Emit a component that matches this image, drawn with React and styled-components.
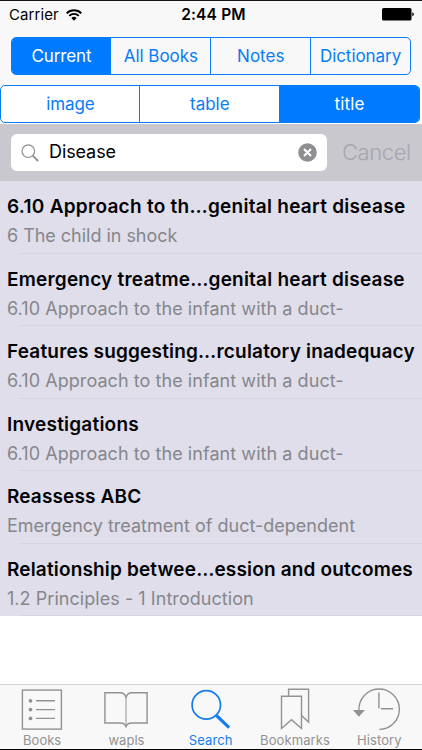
import React, { useState } from "react";
import styled, { createGlobalStyle } from "styled-components";

const GlobalStyle = createGlobalStyle`
	* {
		box-sizing: border-box;
	}
	body {
		margin: 0;
		background-color: #fff;
		font-family: Inter, "Liberation Sans", sans-serif;
	}
	button {
		font-family: inherit;
		padding: 0;
		margin: 0;
		border: 0;
		background: none;
		cursor: pointer;
	}
`;

const Screen = styled.div`
	display: flex;
	flex-direction: column;
	width: 422px;
	height: 750px;
	overflow: hidden;
	border-top: 1px solid #171417;
	border-bottom: 1px solid #000;
	background-color: #fff;
`;

const Header = styled.header`
	height: 84px;
	flex-shrink: 0;
	background-color: #f8f8f8;
`;

const StatusBar = styled.div`
	display: grid;
	grid-template-columns: 1fr auto 1fr;
	align-items: center;
	height: 27px;
	padding: 0 8px 0 9px;
	color: #000;
`;

const Carrier = styled.div`
	display: flex;
	align-items: center;
	gap: 7px;
	font-size: 15px;
	letter-spacing: 0.08px;
`;

const Time = styled.div`
	font-size: 15.5px;
	font-weight: 600;
	letter-spacing: 0.18px;
	padding-left: 4px;
`;

const Battery = styled.svg`
	justify-self: end;
`;

const Segments = styled.div`
	display: flex;
	width: ${(props) => props.$width}px;
	height: 38px;
	margin: ${(props) => props.$margin};
	flex-shrink: 0;
	border: 1px solid #087cf4;
	border-radius: 5px;
	overflow: hidden;
	background-color: ${(props) => props.$background};
`;

const Segment = styled.button`
	flex: 1 1 0;
	font-size: 17px;
	line-height: 37px;
	letter-spacing: ${(props) => props.$spacing}px;
	color: ${(props) => (props.$active ? "#fff" : "#087cf4")};
	background-color: ${(props) => (props.$active ? "#007aff" : "transparent")};
	&:first-child {
		margin-right: -0.4px;
	}
	& + & {
		border-left: 1px solid #087cf4;
	}
`;

const SearchBar = styled.div`
	display: flex;
	align-items: center;
	height: 57px;
	flex-shrink: 0;
	padding: 0 11px;
	background-color: #c9c8ce;
`;

const SearchField = styled.div`
	display: flex;
	align-items: center;
	width: 316px;
	height: 37px;
	padding: 0 10px;
	border-radius: 6px;
	background-color: #fff;
`;

const Query = styled.input`
	flex: 1;
	min-width: 0;
	margin-left: 10px;
	padding: 0 0 2px;
	border: 0;
	outline: 0;
	background: none;
	font-family: inherit;
	font-size: 18px;
	letter-spacing: -0.1px;
	color: #000;
`;

const ClearButton = styled.button`
	display: flex;
`;

const Cancel = styled.button`
	margin-left: 15px;
	padding-bottom: 2px;
	font-size: 22px;
	font-weight: 300;
	letter-spacing: -0.4px;
	color: #a6a6ac;
`;

const List = styled.ul`
	margin: 0;
	padding: 0;
	height: 435px;
	flex-shrink: 0;
	display: grid;
	grid-template-rows: repeat(6, 1fr);
	list-style: none;
	background-color: #dfdeea;
`;

const Item = styled.li`
	padding: 14px 0 0 7px;
	white-space: nowrap;
	background: linear-gradient(#d5d4df, #d5d4df) 19px 100% / 100% 1px no-repeat;
`;

const Title = styled.h3`
	margin: 0;
	font-size: 19px;
	line-height: 24px;
	font-weight: 600;
	letter-spacing: ${(props) => props.$spacing}px;
	color: #030306;
`;

const Subtitle = styled.p`
	margin: 5px 0 0;
	font-size: 18px;
	line-height: 24px;
	letter-spacing: ${(props) => props.$spacing}px;
	color: #86868b;
`;

const TabBar = styled.nav`
	display: grid;
	grid-template-columns: repeat(5, 84.3px);
	height: 65px;
	margin-top: auto;
	border-top: 1px solid #d2d2d2;
	background-color: #f8f8f8;
`;

const Tab = styled.button`
	display: flex;
	flex-direction: column;
	align-items: center;
	color: ${(props) => (props.$active ? "#147cf0" : "#929292")};
	svg {
		display: block;
		flex-shrink: 0;
		overflow: visible;
	}
`;

const TabLabel = styled.span`
	font-size: 13px;
	line-height: 16px;
	letter-spacing: ${(props) => props.$spacing}px;
`;

const WifiIcon = () => (
	<svg width="16" height="12" viewBox="0 0 16 12" fill="none" stroke="#000" strokeWidth="1.9">
		<path d="M0.7 4.3a10.3 10.3 0 0 1 14.6 0M3.2 6.9a6.8 6.8 0 0 1 9.6 0" />
		<path d="M8 11.8 5.3 9.1a3.8 3.8 0 0 1 5.4 0Z" fill="#000" stroke="none" />
	</svg>
);

const BatteryIcon = () => (
	<Battery width="32" height="13" viewBox="0 0 32 13">
		<rect x="0" y="0" width="29.5" height="12.5" rx="1.6" />
		<path d="M30.3 4.3q1.5.5 1.5 2t-1.5 2Z" />
	</Battery>
);

const FieldSearchIcon = () => (
	<svg width="18" height="18" viewBox="0 0 18 18" fill="none" stroke="#8e8e93">
		<circle cx="7.3" cy="7.2" r="6.3" strokeWidth="1.2" />
		<path d="m11.9 11.8 5.2 5.2" strokeWidth="1.8" />
	</svg>
);

const ClearIcon = () => (
	<svg width="19" height="19" viewBox="0 0 19 19">
		<circle cx="9.5" cy="9.5" r="9.3" fill="#8e8e93" />
		<path d="m6 6 7 7m0-7-7 7" stroke="#fff" strokeWidth="2" />
	</svg>
);

const tabIconProps = {
	width: 50,
	height: 47,
	viewBox: "0 0 50 47",
	fill: "none",
	stroke: "currentColor",
	strokeWidth: 1.4
};

const BooksIcon = () => (
	<svg {...tabIconProps}>
		<rect x="5.4" y="5.1" width="39" height="39" />
		<path d="M19 15.8h19M19 24.6h19M19 33.4h19" />
		<g fill="currentColor" stroke="none">
			<circle cx="13.5" cy="15.8" r="1.9" />
			<circle cx="13.5" cy="24.6" r="1.9" />
			<circle cx="13.5" cy="33.4" r="1.9" />
		</g>
	</svg>
);

const OpenBookIcon = () => (
	<svg {...tabIconProps}>
		<path d="M25 12.3Q23.3 7.7 19.5 7.7H3.9V38h15.6q4 0 5.5 3.6 1.5-3.6 5.5-3.6h15.6V7.7H30.5q-3.8 0-5.5 4.6Z" />
		<path d="M25 12.3v29.3" strokeWidth="1" />
	</svg>
);

const SearchIcon = () => (
	<svg {...tabIconProps}>
		<circle cx="20.3" cy="19.9" r="14.2" strokeWidth="1.7" />
		<path d="m30.3 30.3 12.8 12.4" strokeWidth="3.2" />
	</svg>
);

const BookmarksIcon = () => (
	<svg {...tabIconProps}>
		<path d="M11.5 11.3h20v32.2L21.5 34.7l-10 8.8Z" />
		<path d="M18.6 11.3V4.2h20v32.9l-7.1-6.7" />
	</svg>
);

const HistoryIcon = () => (
	<svg {...tabIconProps}>
		<path d="M5 25.5A20.2 20.2 0 1 1 25.3 44.4" />
		<path d="M24.9 7.5v16M26.9 23.7h12.2" />
		<path d="M-1.1 25h12l-6 6.8Z" fill="currentColor" stroke="none" />
	</svg>
);

const scopes = [
	{ label: "Current", spacing: -0.1 },
	{ label: "All Books", spacing: -0.05 },
	{ label: "Notes", spacing: 0 },
	{ label: "Dictionary", spacing: -0.05 }
];

const filters = [
	{ label: "image", spacing: -0.1 },
	{ label: "table", spacing: 0 },
	{ label: "title", spacing: 0.15 }
];

const results = [
	{
		title: "6.10 Approach to th…genital heart disease",
		subtitle: "6 The child in shock",
		titleSpacing: 0.27,
		subtitleSpacing: -0.03
	},
	{
		title: "Emergency treatme…genital heart disease",
		subtitle: "6.10 Approach to the infant with a duct-",
		titleSpacing: 0.21,
		subtitleSpacing: 0.06
	},
	{
		title: "Features suggesting…rculatory inadequacy",
		subtitle: "6.10 Approach to the infant with a duct-",
		titleSpacing: 0.19,
		subtitleSpacing: 0.06
	},
	{
		title: "Investigations",
		subtitle: "6.10 Approach to the infant with a duct-",
		titleSpacing: 0.22,
		subtitleSpacing: 0.06
	},
	{
		title: "Reassess ABC",
		subtitle: "Emergency treatment of duct-dependent",
		titleSpacing: 0.14,
		subtitleSpacing: 0.01
	},
	{
		title: "Relationship betwee…ession and outcomes",
		subtitle: "1.2 Principles - 1 Introduction",
		titleSpacing: 0.16,
		subtitleSpacing: 0.05
	}
];

const tabs = [
	{ label: "Books", Icon: BooksIcon, spacing: 0 },
	{ label: "wapls", Icon: OpenBookIcon, spacing: 0 },
	{ label: "Search", Icon: SearchIcon, spacing: 0.1 },
	{ label: "Bookmarks", Icon: BookmarksIcon, spacing: 0.1 },
	{ label: "History", Icon: HistoryIcon, spacing: 0.1 }
];

const SegmentedControl = ({ items, value, onChange, width, margin, background }) => (
	<Segments $width={width} $margin={margin} $background={background}>
		{items.map(({ label, spacing }) => (
			<Segment
				key={label}
				$active={label === value}
				$spacing={spacing}
				onClick={() => onChange(label)}
			>
				{label}
			</Segment>
		))}
	</Segments>
);

const App = () => {
	const [ scope, setScope ] = useState("Current");
	const [ filter, setFilter ] = useState("title");
	const [ query, setQuery ] = useState("Disease");
	const [ tab, setTab ] = useState("Search");

	return (
		<>
			<GlobalStyle />
			<Screen>
				<Header>
					<StatusBar>
						<Carrier>
							Carrier
							<WifiIcon />
						</Carrier>
						<Time>2:44 PM</Time>
						<BatteryIcon />
					</StatusBar>
					<SegmentedControl
						items={scopes}
						value={scope}
						onChange={setScope}
						width={400}
						margin="9px 0 0 11px"
						background="#f8f8f8"
					/>
				</Header>
				<SegmentedControl
					items={filters}
					value={filter}
					onChange={setFilter}
					width={420}
					margin="0 0 1px"
					background="#fff"
				/>
				<SearchBar>
					<SearchField>
						<FieldSearchIcon />
						<Query value={query} onChange={(e) => setQuery(e.target.value)} />
						<ClearButton aria-label="Clear" onClick={() => setQuery("")}>
							<ClearIcon />
						</ClearButton>
					</SearchField>
					<Cancel>Cancel</Cancel>
				</SearchBar>
				<List>
					{results.map((result) => (
						<Item key={result.title}>
							<Title $spacing={result.titleSpacing}>{result.title}</Title>
							<Subtitle $spacing={result.subtitleSpacing}>{result.subtitle}</Subtitle>
						</Item>
					))}
				</List>
				<TabBar>
					{tabs.map(({ label, Icon, spacing }) => (
						<Tab key={label} $active={label === tab} onClick={() => setTab(label)}>
							<Icon />
							<TabLabel $spacing={spacing}>{label}</TabLabel>
						</Tab>
					))}
				</TabBar>
			</Screen>
		</>
	);
};

export default App;
